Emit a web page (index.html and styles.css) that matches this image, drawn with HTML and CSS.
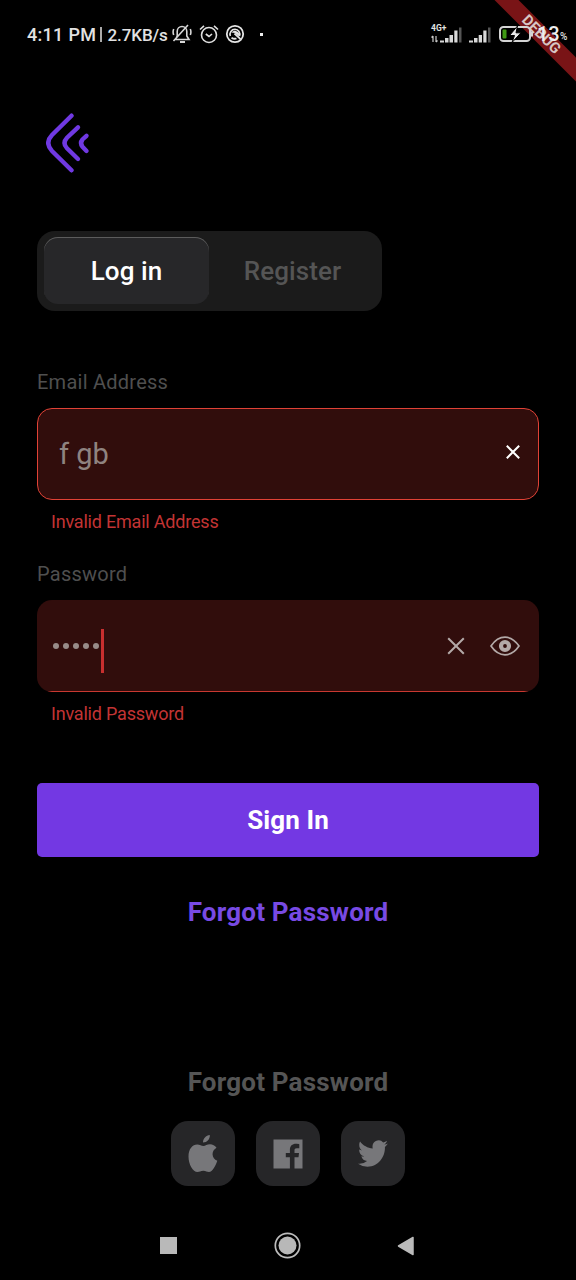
FILE: index.html
```html
<!DOCTYPE html>
<html lang="en">
<head>
<meta charset="utf-8">
<title>Log in</title>
<link rel="stylesheet" href="styles.css">
</head>
<body>
<div class="screen">
  <header class="status">
    <div class="status-left">
      <span class="clock">4:11 PM</span><span class="divider"></span><span class="rate">2.7KB/s</span>
      <svg class="bell" width="20" height="20" viewBox="0 0 20 20" fill="none" stroke="#d6d6d6" stroke-width="1.600">
        <path d="M3.500 15.500H17L14.800 12V7.500C14.800 4.500 12.500 2.500 10 2.500S5.200 4.500 5.200 7.500V12ZM1.500 17 16 1M1.700 5Q0.500 8 1.700 11M18.300 5Q19.500 8 18.300 11"/>
        <path d="M8 18h5" stroke-width="2"/>
      </svg>
      <svg class="alarm" width="20" height="20" viewBox="0 0 20 20" fill="none" stroke="#e0e0e0" stroke-width="1.600">
        <circle cx="10" cy="11" r="7.500"/><path d="M1 5.500 5 1.800M19 5.500 15 1.800M6.800 10l3.200 2.500 3-2.500"/>
      </svg>
      <svg class="disc" width="20" height="20" viewBox="0 0 20 20" fill="none" stroke="#e5e5e5">
        <circle cx="10" cy="10" r="8.200" stroke-width="1.800"/>
        <path d="M5.300 12A5 5 0 0 1 10 5.300 5 5 0 0 1 14.500 12" stroke-width="1.600"/>
        <path d="M6.500 8.500A4.500 4.500 0 0 1 14.300 12.500L10 9Z" fill="#e5e5e5" stroke="none"/>
        <path d="M6.500 13.700Q9 15.300 11.500 14.500M9.500 9.500l6 5.700" stroke-width="1.800"/>
      </svg>
      <span class="more"></span>
    </div>
    <div class="status-right">
      <div class="network">
        <span class="gen">4G+</span>
        <svg width="31" height="18" viewBox="0 0 31 18">
          <path d="M2 11v6M0.500 12.500 2 11M5 11v6M5 17l1.500-1.500" fill="none" stroke="#ccc" stroke-width="1.200"/>
          <path fill="#d9d9d9" d="M9 15.500h4V17.500H9zM14 13h3.500v4.500H14zM18.500 10h3.500v7.500h-3.500zM23.300 5.500h3.200v12h-3.200z"/>
          <path fill="#555" d="M28 2.500h2.500v15H28z"/>
        </svg>
      </div>
      <svg class="signal" width="22" height="18" viewBox="0 0 22 18">
        <path fill="#d9d9d9" d="M0 15.500h4V17.500H0zM5 13h3.500v4.500H5zM9.700 10h3.300v7.500H9.700zM14.300 5.500h3.200v12h-3.200z"/>
        <path fill="#555" d="M19 2.500h2.500v15H19z"/>
      </svg>
      <svg class="battery" width="35" height="18" viewBox="0 0 35 18">
        <rect x="1" y="2" width="30" height="14" rx="3.500" fill="none" stroke="#d4d4d4" stroke-width="2"/>
        <path d="M33 6.500v5" stroke="#d4d4d4" stroke-width="2"/>
        <rect x="3.500" y="4.500" width="4" height="9" rx="1" fill="#3f9a14"/>
        <path d="M18.500 1 10.500 10.500H15.500L13 17.500 22 7.800H17Z" fill="#e8e8e8" stroke="#000" stroke-width="1"/>
      </svg>
      <span class="level">13</span><span class="percent">%</span>
    </div>
  </header>
  <div class="ribbon"><span>DEBUG</span></div>

  <main class="content">
    <svg class="logo" width="44" height="60" viewBox="0 0 44 60" fill="none" stroke="#7039e2" stroke-width="4.400" stroke-linecap="round">
      <path d="M25.500 2.700 6 22Q-1.500 30 6 38L25.500 57.300"/>
      <path d="M32 14.300 21 24.700Q16 30 21 35.300L32 46"/>
      <path d="M40.500 22.800 36.500 26.500Q33.500 30.200 36.500 33.800L40.500 38"/>
    </svg>
    <nav class="tabs">
      <a class="tab active"><span>Log in</span></a>
      <a class="tab"><span>Register</span></a>
    </nav>
    <section class="group">
      <div class="label">Email Address</div>
      <div class="field outlined">
        <span class="value">f gb</span>
        <svg width="16" height="16" viewBox="0 0 16 16" stroke="#fff" stroke-width="2"><path d="M1.800 1.800 14.200 14.200M14.200 1.800 1.800 14.200"/></svg>
      </div>
      <div class="error">Invalid Email Address</div>
    </section>
    <section class="group">
      <div class="label">Password</div>
      <div class="field underlined">
        <div class="dots"><i></i><i></i><i></i><i></i><i></i></div><span class="caret"></span>
        <svg class="clear" width="18" height="18" viewBox="0 0 18 18" stroke="#b3a9a8" stroke-width="2"><path d="M1.200 1.200 16.800 16.800M16.800 1.200 1.200 16.800"/></svg>
        <svg class="eye" width="30" height="20" viewBox="0 0 30 20" fill="none" stroke="#b3a9a8">
          <path d="M1 10Q7 1.200 15 1.200T29 10Q23 18.800 15 18.800T1 10Z" stroke-width="1.700"/>
          <circle cx="15" cy="10" r="4" stroke-width="4.200"/>
        </svg>
      </div>
      <div class="error">Invalid Password</div>
    </section>
    <button class="submit"><span>Sign In</span></button>
    <a class="forgot"><span>Forgot Password</span></a>
    <div class="alternate"><span>Forgot Password</span></div>
    <div class="social">
      <a><svg width="30" height="38" viewBox="0 0 30 38" fill="#77777a">
        <path d="M15 7.500C15 3.500 18 .5 21.800 0 22.200 4 19 7.500 15 7.500ZM15.300 11C17.500 11 19 9.300 22 9.300 24.500 9.300 27 10.600 28.500 12.800 22.800 16 23.500 23.500 29.300 25.800 27.500 31 24.500 37 21 37 18.800 37 18 35.700 15.300 35.700 12.500 35.700 11.500 37 9.500 37 5 37 .5 29.500.5 21.500.5 14 4.500 9.600 9.200 9.600 11.800 9.600 13.600 11 15.300 11Z"/></svg></a>
      <a><svg width="30" height="30" viewBox="0 0 30 30" fill="#77777a">
        <path fill-rule="evenodd" d="M.5.5H29.500V29.500H21.500V18.300H25.500L26 14H21.500V11.300C21.500 10 22 9.200 23.800 9.200H26.300V5.200C25.700 5 24.500 4.800 23 4.800 19.200 4.800 16.900 7 16.900 10.800V14H12.800V18.300H16.900V29.500H.5Z"/></svg></a>
      <a><svg width="30" height="27" viewBox="0 0 24 20" preserveAspectRatio="none" fill="#77777a">
        <path d="M23.950 2.570a10 10 0 0 1-2.820.77 4.960 4.960 0 0 0 2.160-2.720c-.95.550-2 .950-3.120 1.180a4.920 4.920 0 0 0-8.390 4.490C7.700 6.090 4.070 4.130 1.640 1.160a4.820 4.820 0 0 0-.66 2.480c0 1.710.87 3.210 2.180 4.100a4.900 4.900 0 0 1-2.230-.62v.06a4.920 4.920 0 0 0 3.950 4.830 4.960 4.960 0 0 1-2.210.08 4.940 4.940 0 0 0 4.600 3.420A9.870 9.870 0 0 1 0 17.540a13.990 13.990 0 0 0 7.560 2.210c9.050 0 14-7.500 14-13.980l-.02-.64a9.940 9.940 0 0 0 2.410-2.560z"/></svg></a>
    </div>
  </main>

  <footer class="navbar">
    <span class="square"></span>
    <svg width="27" height="27" viewBox="0 0 27 27"><circle cx="13.500" cy="13.500" r="12.200" fill="none" stroke="#bdbdbd" stroke-width="1.700"/><circle cx="13.500" cy="13.500" r="9" fill="#b8b8b8"/></svg>
    <svg width="18" height="20" viewBox="0 0 18 20"><path d="M1.500 10 16 1.500V18.500Z" fill="#bbb" stroke="#bbb" stroke-width="1.500" stroke-linejoin="round"/></svg>
  </footer>
</div>
</body>
</html>
```
FILE: styles.css
```css
* { box-sizing: border-box; }
body { margin: 0; background: #000; font-family: Roboto, "Liberation Sans", sans-serif; }
.screen { position: relative; width: 576px; height: 1280px; overflow: hidden; background: #000; display: flex; flex-direction: column; }
svg { display: block; flex: none; }

.status { position: relative; z-index: 1; height: 70px; padding: 0 8px 2px 27px; display: flex; justify-content: space-between; align-items: center; color: #e2e2e2; font-weight: 500; white-space: nowrap; }
.status-left, .status-right { display: flex; align-items: center; }
.clock { width: 69px; font-size: 18px; letter-spacing: .3px; padding-top: 1px; }
.divider { width: 1.500px; height: 15px; margin: 1px 6px 0 4px; background: #aaa; }
.rate { width: 61px; font-size: 17px; letter-spacing: -.1px; padding-top: 1px; }
.bell { margin-left: 3px; }
.alarm { margin-left: 7px; }
.disc { margin-left: 6px; }
.more { width: 3px; height: 3px; margin-left: 15px; background: #eee; }
.network { width: 31px; height: 18px; display: grid; margin-right: 7px; }
.network > * { grid-area: 1 / 1; }
.gen { font-size: 8.500px; line-height: 8px; margin-top: -1px; font-weight: 700; }
.signal { margin-right: 8px; }
.battery { margin-right: 3px; }
.level { width: 23px; font-size: 20px; color: #eee; }
.percent { width: 8px; font-size: 10px; margin-top: 5px; }
.ribbon { position: absolute; top: 26px; left: 470.500px; width: 140px; height: 17px; background: #791416; transform: rotate(45deg); display: flex; justify-content: center; align-items: center; z-index: 0; }
.ribbon span { color: #d7c5c3; font-size: 15px; font-weight: 700; line-height: 17px; }

.content { padding: 43px 37px 0; display: flex; flex-direction: column; }
.logo { margin-left: 9px; }
.tabs { width: 345px; height: 80px; margin-top: 58px; padding: 6px 7px 7px; border-radius: 18px; background: #1b1b1b; display: flex; }
.tab { flex: 1; height: 67px; border-radius: 14px; display: flex; justify-content: center; align-items: center; padding-top: 1px; font-size: 26px; font-weight: 500; letter-spacing: .1px; color: #555; }
.tab + .tab { padding-left: 1px; }
.tab.active { background: #272729; color: #fff; box-shadow: inset 0 1px 0 #5c5c5c; }
.group { display: flex; flex-direction: column; }
.tabs + .group { margin-top: 59px; }
.label { height: 24px; line-height: 24px; margin-bottom: 14px; font-size: 20px; letter-spacing: .25px; color: #4f4f4f; }
.field { height: 92px; border-radius: 15px; background: #310d0c; display: flex; align-items: center; }
.outlined { border: 1.500px solid #e04236; padding: 0 17px 5px 21px; justify-content: space-between; }
.value { font-size: 29px; color: #8f8380; padding-top: 4px; }
.underlined { background: linear-gradient(#c93830, #c93830) 0 100% / 100% 1.500px no-repeat, #310d0c; padding: 0 19px 0 16px; }
.dots { display: flex; gap: 4px; }
.dots i { width: 6px; height: 6px; border-radius: 50%; background: #978b89; }
.caret { width: 3px; height: 44px; margin: 9px 0 0 2px; background: #c82f2f; }
.clear { margin-left: auto; }
.eye { margin-left: 25px; }
.error { height: 22px; line-height: 22px; margin: 11px 0 0 14px; font-size: 18px; letter-spacing: -.2px; color: #c33434; }
.group + .group { margin-top: 29px; }
.submit { height: 74px; margin-top: 58px; border: 0; border-radius: 5px; background: #7338e3; color: #fff; font: 700 26px Roboto, "Liberation Sans", sans-serif; letter-spacing: .1px; }
.forgot, .alternate { text-align: center; height: 32px; line-height: 32px; font-size: 26px; font-weight: 700; letter-spacing: .2px; color: #784ae4; }
.forgot { margin-top: 39px; }
.alternate { margin-top: 138px; color: #555; }
.social { display: flex; justify-content: center; gap: 21px; margin-top: 23px; }
.social a { width: 64px; height: 65px; border-radius: 17px; background: #262628; display: flex; justify-content: center; align-items: center; }

.navbar { height: 27px; margin: auto 161px 21px 160px; display: flex; align-items: center; justify-content: space-between; }
.navbar svg:first-of-type { margin-left: 1px; }
.square { width: 17px; height: 17px; background: #b9b9b9; }
```
